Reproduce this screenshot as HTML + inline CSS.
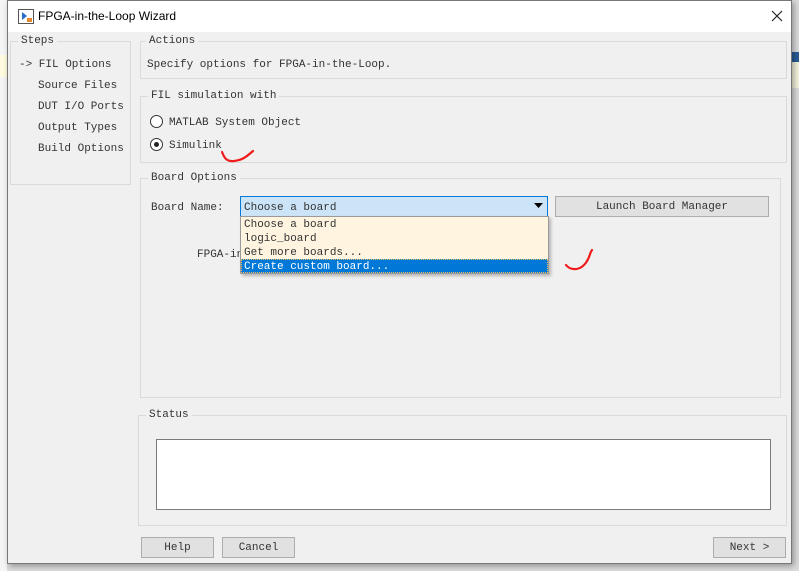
<!DOCTYPE html>
<html><head><meta charset="utf-8"><style>
*{margin:0;padding:0;box-sizing:border-box}
body{width:799px;height:571px;overflow:hidden;background:#dcdcdc;position:relative;font-family:"Liberation Mono",monospace;font-size:11px;color:#333}
.a{position:absolute}
.dlg{left:7px;top:0;width:785px;height:564px;background:#f0f0f0;border:1px solid #777;box-shadow:2px 2px 6px rgba(0,0,0,.35)}
.tb{left:0;top:0;width:783px;height:31px;background:#fff;font-family:"Liberation Sans",sans-serif;font-size:12px;color:#000}
.grp{border:1px solid #dadada}
.lg{background:#f0f0f0;padding:0 3px;line-height:13px;margin-top:1px}
.t{white-space:nowrap;line-height:14px;margin-top:1px}
.btn{background:#e1e1e1;border:1px solid #adadad;text-align:center;line-height:21px;color:#333}
</style></head><body>
<div class="a" style="left:0;top:0;width:7px;height:571px;background:#f5f5f5"></div>
<div class="a" style="left:0;top:55px;width:7px;height:22px;background:#fffbe0"></div>
<div class="a" style="left:792px;top:52px;width:7px;height:10px;background:#2a5d95"></div>
<div class="a" style="left:792px;top:62px;width:7px;height:26px;background:#f5f3dc"></div>
<div class="a dlg">
 <div class="a tb">
  <svg class="a" style="left:10px;top:8px" width="16" height="15"><rect x="0.5" y="0.5" width="15" height="14" fill="#fff" stroke="#555"/><path d="M4 3v8l5-4z" fill="#2a6dc8"/><path d="M9 9h5v4H9z" fill="#e58a2c"/></svg>
  <div class="a" style="left:30px;top:8px">FPGA-in-the-Loop Wizard</div>
  <svg class="a" style="left:763px;top:9px" width="12" height="12"><path d="M1 1L11 11M11 1L1 11" stroke="#222" stroke-width="1.2"/></svg>
 </div>
</div>
<div class="a grp" style="left:10px;top:41px;width:121px;height:144px"></div>
<div class="a lg" style="left:18px;top:34px">Steps</div>
<div class="a t" style="left:19px;top:57px">-> FIL Options</div>
<div class="a t" style="left:38px;top:78px">Source Files</div>
<div class="a t" style="left:38px;top:99px">DUT I/O Ports</div>
<div class="a t" style="left:38px;top:120px">Output Types</div>
<div class="a t" style="left:38px;top:141px">Build Options</div>
<div class="a grp" style="left:140px;top:41px;width:647px;height:38px"></div>
<div class="a lg" style="left:146px;top:34px">Actions</div>
<div class="a t" style="left:147px;top:57px">Specify options for FPGA-in-the-Loop.</div>
<div class="a grp" style="left:140px;top:96px;width:647px;height:67px"></div>
<div class="a lg" style="left:148px;top:89px">FIL simulation with</div>
<div class="a" style="left:150px;top:115px;width:13px;height:13px;border:1px solid #333;border-radius:50%;background:#fff"></div>
<div class="a t" style="left:169px;top:115px">MATLAB System Object</div>
<div class="a" style="left:150px;top:138px;width:13px;height:13px;border:1px solid #333;border-radius:50%;background:#fff"></div>
<div class="a" style="left:154px;top:142px;width:5px;height:5px;border-radius:50%;background:#222"></div>
<div class="a t" style="left:169px;top:138px">Simulink</div>
<svg class="a" style="left:218px;top:145px" width="40" height="22"><path d="M4 7C6 12 8 17 16 16S27 13 35 6" stroke="#f01a1a" stroke-width="2.2" fill="none" stroke-linecap="round"/></svg>
<div class="a grp" style="left:140px;top:178px;width:641px;height:220px"></div>
<div class="a lg" style="left:148px;top:171px">Board Options</div>
<div class="a t" style="left:151px;top:200px">Board Name:</div>
<div class="a t" style="left:197px;top:247px">FPGA-in</div>
<div class="a btn" style="left:555px;top:196px;width:214px;height:21px">Launch Board Manager</div>
<div class="a" style="left:240px;top:196px;width:308px;height:21px;background:#cce4f7;border:1px solid #0078d7"></div>
<div class="a t" style="left:244px;top:200px">Choose a board</div>
<svg class="a" style="left:534px;top:203px" width="9" height="6"><path d="M0 0h9L4.5 5z" fill="#000"/></svg>
<div class="a" style="left:240px;top:216px;width:309px;height:58px;background:#fff4e0;border:1px solid #999;box-shadow:2px 2px 3px rgba(0,0,0,.25)"></div>
<div class="a t" style="left:244px;top:217px">Choose a board</div>
<div class="a t" style="left:244px;top:231px">logic_board</div>
<div class="a t" style="left:244px;top:245px">Get more boards...</div>
<div class="a" style="left:241px;top:259px;width:307px;height:14px;background:#0078d7;border:1px dotted #f0c060"></div>
<div class="a t" style="left:244px;top:259px;color:#fff">Create custom board...</div>
<svg class="a" style="left:560px;top:246px" width="38" height="28"><path d="M6 19C10 24 18 25 24 19S29 8 32 4" stroke="#f01a1a" stroke-width="2.2" fill="none" stroke-linecap="round"/></svg>
<div class="a grp" style="left:138px;top:415px;width:649px;height:111px"></div>
<div class="a lg" style="left:146px;top:408px">Status</div>
<div class="a" style="left:156px;top:439px;width:615px;height:71px;background:#fff;border:1px solid #7a7a7a"></div>
<div class="a btn" style="left:141px;top:537px;width:73px;height:21px">Help</div>
<div class="a btn" style="left:222px;top:537px;width:73px;height:21px">Cancel</div>
<div class="a btn" style="left:713px;top:537px;width:73px;height:21px">Next &gt;</div>
</body></html>
